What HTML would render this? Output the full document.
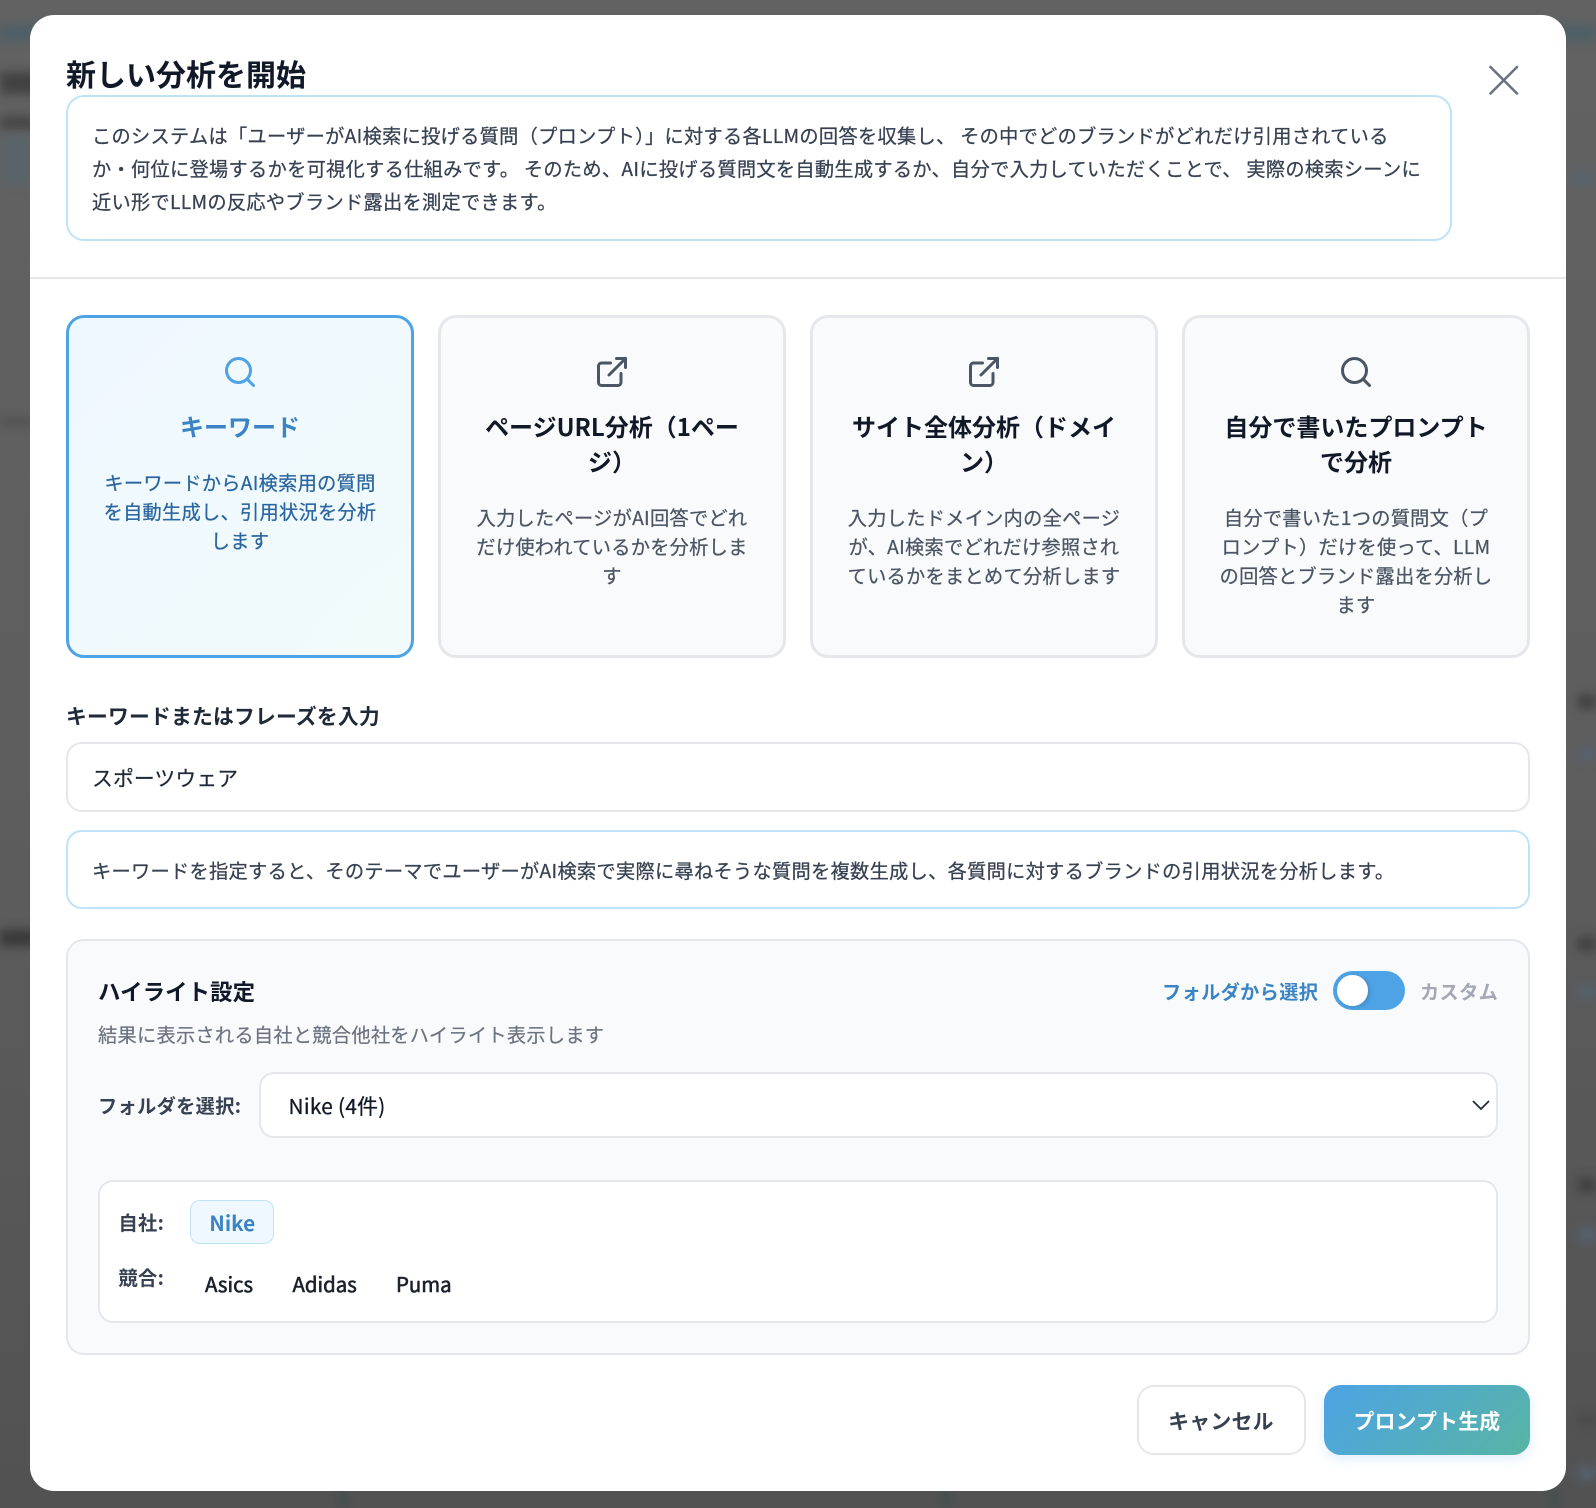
<!DOCTYPE html>
<html lang="ja">
<head>
<meta charset="utf-8">
<title>新しい分析を開始</title>
<style>
*{box-sizing:border-box;margin:0;padding:0}
html,body{width:1596px;height:1508px;overflow:hidden}
body{position:relative;background:linear-gradient(180deg,#626262 0%,#5e5e5e 50%,#525252 100%);font-family:"Noto Sans CJK JP","Liberation Sans",sans-serif;color:#1f2937}
.b{position:absolute;filter:blur(5px)}
.modal{position:absolute;left:30px;top:15px;width:1536px;height:1476px;background:#fff;border-radius:24px}
.a{position:absolute;white-space:nowrap}
h2{position:absolute;left:36px;top:36px;font-size:30px;line-height:44px;font-weight:700;color:#111827;white-space:nowrap}
.close{position:absolute;left:1459px;top:50px}
.info{position:absolute;left:36px;top:80px;width:1386px;height:146px;border:2px solid #bee3f8;border-radius:18px;padding:22px 24px;font-size:19.2px;letter-spacing:.32px;-webkit-text-stroke:.25px;line-height:33px;color:#374151;white-space:nowrap}
.hr{position:absolute;left:0;top:262px;width:1536px;height:2px;background:#e5e7eb}
.card{position:absolute;top:300px;width:348px;height:342.5px;border:3px solid #e5e7eb;border-radius:18px;background:#f9fafb;text-align:center;color:#4b5563}
.card.on{border-color:#4da3e5;background:linear-gradient(135deg,#eff8ff,#f1fbfc);color:#2a659f}
.card svg{position:absolute;left:153px;top:36px}
.card .t{position:absolute;left:0;width:342px;top:89.5px;font-size:24px;line-height:35.5px;font-weight:700;color:#111827;white-space:nowrap}
.card.on .t{color:#3a84c5}
.card .d{position:absolute;left:0;width:342px;font-size:19.2px;letter-spacing:.3px;-webkit-text-stroke:.25px;line-height:29px;white-space:nowrap}
.lab{left:36px;top:685px;font-size:20.8px;letter-spacing:.2px;line-height:30px;font-weight:700;color:#1f2937}
.input{position:absolute;left:36px;top:727px;width:1464px;height:70px;border:2px solid #e5e7eb;border-radius:16px;background:#fff;padding-left:24px;font-size:20.8px;letter-spacing:.15px;-webkit-text-stroke:.2px;line-height:67px;color:#1f2937}
.hint{position:absolute;left:36px;top:815px;width:1464px;height:79px;border:2px solid #bee3f8;border-radius:16px;padding-left:24px;font-size:19.2px;letter-spacing:.32px;-webkit-text-stroke:.25px;line-height:76px;color:#374151;white-space:nowrap}
.panel{position:absolute;left:36px;top:924px;width:1464px;height:416px;border:2px solid #e5e7eb;border-radius:18px;background:#f9fafb}
.select{position:absolute;left:228.5px;top:1056.5px;width:1239.5px;height:66px;border:2px solid #e5e7eb;border-radius:15px;background:#fff;padding-left:28px;font-size:20.8px;letter-spacing:.3px;-webkit-text-stroke:.3px;line-height:62px;color:#111827}
.inner{position:absolute;left:67.5px;top:1164.5px;width:1400.5px;height:143.5px;border:2px solid #e5e7eb;border-radius:15px;background:#fff}
.toggle{position:absolute;left:1302.5px;top:955.5px;width:72px;height:39.5px;border-radius:20px;background:#4da3e5}
.knob{position:absolute;left:4.5px;top:4.5px;width:30.5px;height:30.5px;border-radius:50%;background:#fff;box-shadow:2px 1px 4px rgba(0,0,0,.15)}
.chip{position:absolute;left:159.5px;top:1185px;width:84.5px;height:44px;border:1.5px solid #bee3f8;border-radius:10px;background:#f0f8ff;color:#3a84c5;text-align:center;font-size:20.8px;font-weight:700;line-height:43px;padding-left:1px}
.btn{position:absolute;top:1369.5px;height:70.5px;border-radius:17px;text-align:center;font-size:20.8px;letter-spacing:.3px;font-weight:700;white-space:nowrap}
.cancel{left:1106.5px;width:169px;border:2px solid #e5e7eb;background:#fff;color:#374151;line-height:66.5px}
.go{left:1294px;width:206px;background:linear-gradient(135deg,#4da3e5,#57b5a3);color:#fff;line-height:70.5px;box-shadow:0 4px 12px rgba(77,163,229,.18)}
.s{font-size:19.2px;letter-spacing:.35px;line-height:28px;font-weight:700;color:#374151}
.n{font-size:20.4px;line-height:30px;font-weight:400;-webkit-text-stroke:.6px;color:#1a202c}
</style>
</head>
<body>
<div class="b" style="left:0;top:25px;width:1596px;height:16px;background:#4c5f68"></div>
<div class="b" style="left:0;top:72px;width:40px;height:22px;background:#424242"></div>
<div class="b" style="left:0;top:116px;width:40px;height:14px;background:#464646"></div>
<div class="b" style="left:0;top:135px;width:40px;height:50px;background:#5a6468"></div>
<div class="b" style="left:0;top:418px;width:40px;height:8px;background:#505050"></div>
<div class="b" style="left:0;top:930px;width:40px;height:16px;background:#383838"></div>
<div class="b" style="left:1570px;top:170px;width:26px;height:16px;background:#58636a"></div>
<div class="b" style="left:1578px;top:695px;width:18px;height:14px;background:#404040"></div>
<div class="b" style="left:1578px;top:748px;width:18px;height:12px;background:#566270"></div>
<div class="b" style="left:1578px;top:937px;width:18px;height:14px;background:#404040"></div>
<div class="b" style="left:1578px;top:985px;width:18px;height:14px;background:#566270"></div>
<div class="b" style="left:1578px;top:1178px;width:18px;height:14px;background:#404040"></div>
<div class="b" style="left:1578px;top:1228px;width:18px;height:14px;background:#566270"></div>
<div class="b" style="left:1578px;top:1415px;width:18px;height:10px;background:#484848"></div>
<div class="b" style="left:1578px;top:1466px;width:18px;height:14px;background:#566270"></div>
<div class="b" style="left:340px;top:1488px;width:6px;height:20px;background:#3c4c4c"></div>
<div class="b" style="left:943px;top:1488px;width:6px;height:20px;background:#3c4c4c"></div>
<div class="b" style="left:1552px;top:1488px;width:6px;height:20px;background:#3c4c4c"></div>

<div class="modal">
  <h2>新しい分析を開始</h2>
  <svg class="close" width="30" height="30" viewBox="0 0 30 30" fill="none" stroke="#6b7280" stroke-width="2.6" stroke-linecap="round"><path d="M1.5 2 28 28.5M28 2 1.5 28.5"/></svg>
  <div class="info">このシステムは「ユーザーがAI検索に投げる質問（プロンプト）」に対する各LLMの回答を収集し、 その中でどのブランドがどれだけ引用されている<br>か・何位に登場するかを可視化する仕組みです。 そのため、AIに投げる質問文を自動生成するか、自分で入力していただくことで、 実際の検索シーンに<br>近い形でLLMの反応やブランド露出を測定できます。</div>
  <div class="hr"></div>

  <div class="card on" style="left:36px">
    <svg width="36" height="36" viewBox="0 0 24 24" fill="none" stroke="#4da3e5" stroke-width="2" stroke-linecap="round" stroke-linejoin="round"><circle cx="11" cy="11" r="8"/><path d="m21 21-4.35-4.35"/></svg>
    <div class="t">キーワード</div>
    <div class="d" style="top:149.5px">キーワードからAI検索用の質問<br>を自動生成し、引用状況を分析<br>します</div>
  </div>
  <div class="card" style="left:408px">
    <svg width="36" height="36" viewBox="0 0 24 24" fill="none" stroke="#4b5563" stroke-width="2" stroke-linecap="round" stroke-linejoin="round"><path d="M18 13v6a2 2 0 0 1-2 2H5a2 2 0 0 1-2-2V8a2 2 0 0 1 2-2h6"/><path d="M15 3h6v6"/><path d="M10 14 21 3"/></svg>
    <div class="t">ページURL分析（1ペー<br>ジ）</div>
    <div class="d" style="top:184.5px">入力したページがAI回答でどれ<br>だけ使われているかを分析しま<br>す</div>
  </div>
  <div class="card" style="left:780px">
    <svg width="36" height="36" viewBox="0 0 24 24" fill="none" stroke="#4b5563" stroke-width="2" stroke-linecap="round" stroke-linejoin="round"><path d="M18 13v6a2 2 0 0 1-2 2H5a2 2 0 0 1-2-2V8a2 2 0 0 1 2-2h6"/><path d="M15 3h6v6"/><path d="M10 14 21 3"/></svg>
    <div class="t">サイト全体分析（ドメイ<br>ン）</div>
    <div class="d" style="top:184.5px">入力したドメイン内の全ページ<br>が、AI検索でどれだけ参照され<br>ているかをまとめて分析します</div>
  </div>
  <div class="card" style="left:1152px">
    <svg width="36" height="36" viewBox="0 0 24 24" fill="none" stroke="#4b5563" stroke-width="2" stroke-linecap="round" stroke-linejoin="round"><circle cx="11" cy="11" r="8"/><path d="m21 21-4.35-4.35"/></svg>
    <div class="t">自分で書いたプロンプト<br>で分析</div>
    <div class="d" style="top:184.5px">自分で書いた1つの質問文（プ<br>ロンプト）だけを使って、LLM<br>の回答とブランド露出を分析し<br>ます</div>
  </div>

  <div class="a lab">キーワードまたはフレーズを入力</div>
  <div class="input">スポーツウェア</div>
  <div class="hint">キーワードを指定すると、そのテーマでユーザーがAI検索で実際に尋ねそうな質問を複数生成し、各質問に対するブランドの引用状況を分析します。</div>

  <div class="panel"></div>
  <div class="a" style="left:68px;top:960px;font-size:22.4px;letter-spacing:.12px;line-height:33px;font-weight:700;color:#111827">ハイライト設定</div>
  <div class="a" style="left:68px;top:1005px;font-size:19.2px;letter-spacing:.3px;-webkit-text-stroke:.2px;line-height:28px;color:#6b7280">結果に表示される自社と競合他社をハイライト表示します</div>
  <div class="a s" style="left:1132px;top:961.5px;color:#3a84c5">フォルダから選択</div>
  <div class="toggle"><div class="knob"></div></div>
  <div class="a s" style="left:1390px;top:961.5px;color:#a3a8b4">カスタム</div>
  <div class="a s" style="left:68px;top:1076px">フォルダを選択:</div>
  <div class="select">Nike (4件)</div>
  <svg class="a" style="left:1441px;top:1084px" width="20" height="12" viewBox="0 0 20 12" fill="none" stroke="#1f2937" stroke-width="1.7"><path d="M2 2 10 10 18 2"/></svg>
  <div class="inner"></div>
  <div class="a s" style="left:88.5px;top:1193px">自社:</div>
  <div class="chip">Nike</div>
  <div class="a s" style="left:88.5px;top:1248px">競合:</div>
  <div class="a n" style="left:175px;top:1253px">Asics</div>
  <div class="a n" style="left:262.5px;top:1253px">Adidas</div>
  <div class="a n" style="left:366px;top:1253px">Puma</div>

  <div class="btn cancel">キャンセル</div>
  <div class="btn go">プロンプト生成</div>
</div>
</body>
</html>
